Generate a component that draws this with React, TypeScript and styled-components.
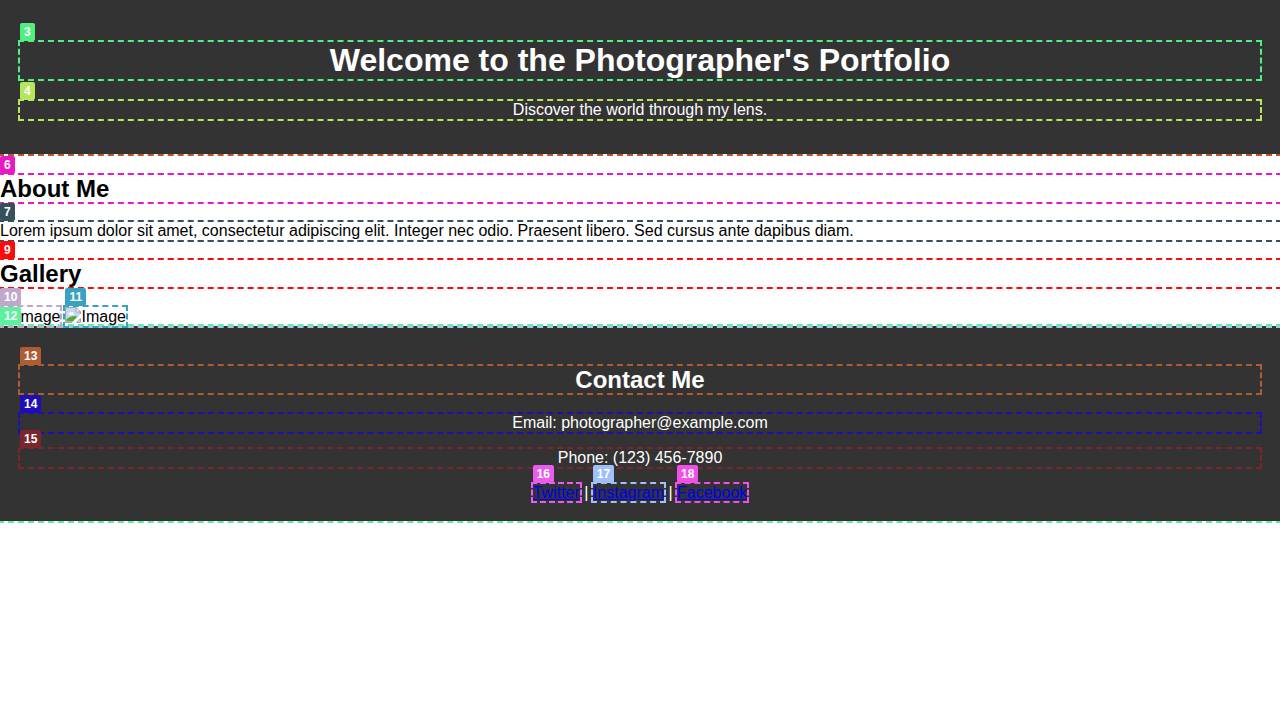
import React from "react";
import styled, { createGlobalStyle } from "styled-components";

const GlobalStyle = createGlobalStyle`
  body {
    margin: 0;
    background: #fff;
    color: #000;
    font: 16px/18px "Liberation Sans", Arial, sans-serif;
  }
`;

const Page = styled.div`
  min-height: 100vh;
`;

const Header = styled.header`
  display: grid;
  gap: 22px;
  padding: 42px 20px 35px;
  background: #333;
  color: #fff;
  text-align: center;
  outline: 2px dashed #c05428;
`;

const Section = styled.section<{ $c: string }>`
  position: relative;
  z-index: 1;
  display: grid;
  gap: 20px;
  margin-top: 20px;
  outline: 2px dashed ${(p) => p.$c};
`;

const Main = styled.main`
  padding-top: 1px;
`;

const Footer = styled.footer`
  position: relative;
  display: grid;
  gap: 17px;
  padding: 40px 20px 19px;
  background: #333;
  color: #fff;
  text-align: center;
  outline: 2px dashed #5cf0a0;

  h2 {
    margin-bottom: 4px;
  }
`;

const Title = styled.h1<{ $c: string }>`
  position: relative;
  margin: 0;
  font-size: 32px;
  line-height: 37px;
  outline: 2px dashed ${(p) => p.$c};
`;

const Heading = styled.h2<{ $c: string }>`
  position: relative;
  margin: 0;
  font-size: 24px;
  line-height: 27px;
  outline: 2px dashed ${(p) => p.$c};
`;

const Text = styled.p<{ $c: string }>`
  position: relative;
  margin: 0;
  outline: 2px dashed ${(p) => p.$c};
`;

const Link = styled.a<{ $c: string }>`
  position: relative;
  color: #0000ee;
  outline: 2px dashed ${(p) => p.$c};
`;

const Tag = styled.span<{ $c: string }>`
  position: absolute;
  left: 0;
  top: -19px;
  z-index: 2;
  padding: 2px 4px;
  border-radius: 2px;
  background: ${(p) => p.$c};
  color: #fff;
  font-size: 12px;
  font-weight: bold;
  line-height: 14px;
`;

const Photos = styled.div`
  display: flex;
  gap: 5px;
`;

const Photo = styled.span<{ $c: string }>`
  position: relative;
  display: flex;
  outline: 2px dashed ${(p) => p.$c};

  svg {
    width: 16px;
    height: 16px;
  }
`;

const Alt = styled.span`
  padding-top: 1px;
`;

const BrokenImage = () => (
  <svg viewBox="0 0 16 16" aria-hidden="true">
    <path d="M1 1H11L15 5V15H1Z" fill="#c6d8f4" />
    <path d="M3.5 7.5C3 5.8 4.7 5 5.5 5.6C6.4 4.4 8.6 5 8.4 6.8C9.4 7 9.2 8 8.5 8H4Z" fill="#fff" />
    <path d="M1.5 14.5V12Q7 8 12.5 9.5L8 14.5Z" fill="#5aa83a" />
    <path d="M16 6.5L7 15.5V16H11.5L16 11.5Z" fill="#fff" />
    <path d="M.5 15.5V.5H11L15.5 5V7M.5 15.5H7M11.5 15.5H15.5V11.5Z" fill="none" stroke="#a5a5a5" />
    <path d="M11 .5V5H15.5Z" fill="#fff" stroke="#a5a5a5" />
  </svg>
);

export default function App() {
  return (
    <Page>
      <GlobalStyle />
      <Header>
        <Title $c="#4ff082">
          <Tag $c="#4ff082">3</Tag>Welcome to the Photographer's Portfolio
        </Title>
        <Text $c="#b5e65c">
          <Tag $c="#b5e65c">4</Tag>Discover the world through my lens.
        </Text>
      </Header>
      <Main>
        <Section $c="#8a5ccc">
          <Heading $c="#e61ac0">
            <Tag $c="#e61ac0">6</Tag>About Me
          </Heading>
          <Text $c="#34515c">
            <Tag $c="#34515c">7</Tag>Lorem ipsum dolor sit amet, consectetur adipiscing elit. Integer nec odio.
            Praesent libero. Sed cursus ante dapibus diam.
          </Text>
        </Section>
        <Section $c="#a0c8e8">
          <Heading $c="#ff0a0a">
            <Tag $c="#ff0a0a">9</Tag>Gallery
          </Heading>
          <Photos>
            <Photo $c="#bfa8cc">
              <Tag $c="#bfa8cc">10</Tag>
              <BrokenImage />
              <Alt>Image</Alt>
            </Photo>
            <Photo $c="#38a3c0">
              <Tag $c="#38a3c0">11</Tag>
              <BrokenImage />
              <Alt>Image</Alt>
            </Photo>
          </Photos>
        </Section>
      </Main>
      <Footer>
        <Tag $c="#5cf0a0">12</Tag>
        <Heading $c="#ad5c33">
          <Tag $c="#ad5c33">13</Tag>Contact Me
        </Heading>
        <Text $c="#1f0db8">
          <Tag $c="#1f0db8">14</Tag>Email: photographer@example.com
        </Text>
        <Text $c="#7a262e">
          <Tag $c="#7a262e">15</Tag>Phone: (123) 456-7890
        </Text>
        <div>
          <Link href="#twitter" $c="#e85cf0">
            <Tag $c="#e85cf0">16</Tag>Twitter
          </Link>
          {" | "}
          <Link href="#instagram" $c="#a0c0f8">
            <Tag $c="#a0c0f8">17</Tag>Instagram
          </Link>
          {" | "}
          <Link href="#facebook" $c="#f04fe8">
            <Tag $c="#f04fe8">18</Tag>Facebook
          </Link>
        </div>
      </Footer>
    </Page>
  );
}
